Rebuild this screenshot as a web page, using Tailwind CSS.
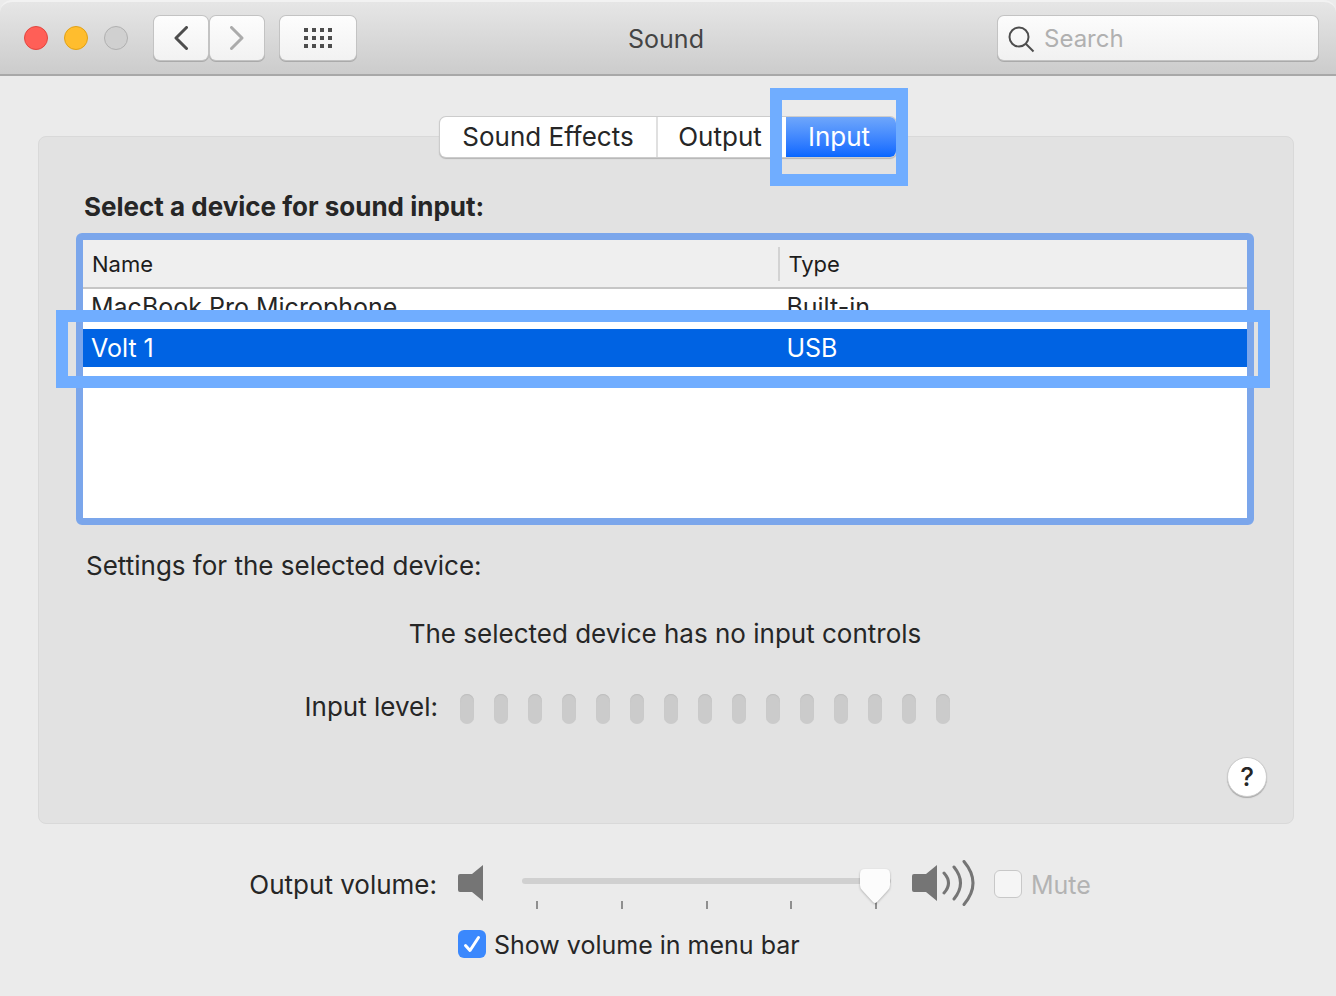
<!DOCTYPE html>
<html lang="en">
<head>
    <meta charset="UTF-8">
    <meta name="viewport" content="width=device-width, initial-scale=1.0">
    <title>Sound</title>
    <script src="https://cdn.jsdelivr.net/npm/@tailwindcss/browser@4"></script>
</head>
<body class="min-h-screen bg-[#ebebeb] font-[Inter,'Liberation_Sans',sans-serif] text-[25px] leading-8 text-[#262626]">
    <!-- Title bar -->
    <header class="grid h-[76px] grid-cols-[1fr_auto_1fr] items-center rounded-t-xl border-t-2 border-b-2 border-t-[#f2f2f2] border-b-[#a8a8a8] bg-linear-to-b from-[#e6e6e6] to-[#cccccc] pr-[18px] pl-6">
        <div class="flex items-center">
            <div class="flex gap-4">
                <button type="button" aria-label="Close" class="size-6 rounded-full border border-[#e2463f] bg-[#ff5f57]"></button>
                <button type="button" aria-label="Minimize" class="size-6 rounded-full border border-[#e1a116] bg-[#ffbd2e]"></button>
                <button type="button" aria-label="Zoom" disabled class="size-6 rounded-full border border-[#b0b0b0] bg-[#d0d0d0]"></button>
            </div>
            <div class="ml-[26px] flex gap-0.5">
                <button type="button" aria-label="Back" class="flex h-11 w-[54px] items-center justify-center rounded-md bg-linear-to-b from-[#fdfdfd] to-[#f2f2f2] shadow-[0_0_0_1px_#c3c3c3,0_1px_0_1px_#aaaaaa]">
                    <svg class="h-6 w-[14px]" viewBox="0 0 14 24" fill="none" stroke="#4d4d4d" stroke-width="3" stroke-linecap="round" stroke-linejoin="round"><path d="M12.500 1.500 2 12l10.500 10.500"/></svg>
                </button>
                <button type="button" aria-label="Forward" disabled class="flex h-11 w-[54px] items-center justify-center rounded-md bg-linear-to-b from-[#fdfdfd] to-[#f2f2f2] shadow-[0_0_0_1px_#c3c3c3,0_1px_0_1px_#aaaaaa]">
                    <svg class="h-6 w-[14px]" viewBox="0 0 14 24" fill="none" stroke="#ababab" stroke-width="3" stroke-linecap="round" stroke-linejoin="round"><path d="M1.500 1.500 12 12 1.500 22.500"/></svg>
                </button>
            </div>
            <button type="button" aria-label="Show All" class="ml-4 flex h-11 w-[76px] items-center justify-center rounded-md bg-linear-to-b from-[#fdfdfd] to-[#f2f2f2] shadow-[0_0_0_1px_#c3c3c3,0_1px_0_1px_#aaaaaa]">
                <svg class="h-5 w-7" viewBox="0 0 28 20" fill="#4d4d4d"><path d="M0 0h4v4H0zM8 0h4v4H8zM16 0h4v4h-4zM24 0h4v4h-4zM0 8h4v4H0zM8 8h4v4H8zM16 8h4v4h-4zM24 8h4v4h-4zM0 16h4v4H0zM8 16h4v4H8zM16 16h4v4h-4zM24 16h4v4h-4z"/></svg>
            </button>
        </div>
        <h1 class="pt-0.5 pr-[10px] text-[#444444]">Sound</h1>
        <label class="flex h-11 w-80 items-center justify-self-end rounded-md bg-linear-to-b from-[#fcfcfc] to-[#f1f1f1] pl-[10px] shadow-[0_0_0_1px_#c3c3c3,0_1px_0_1px_#aaaaaa]">
            <svg class="mt-1 size-7 shrink-0" viewBox="0 0 28 28" fill="none" stroke="#4d4d4d" stroke-width="2"><circle cx="11" cy="11" r="9.500"/><path d="m17.500 17.500 8 8"/></svg>
            <input type="text" aria-label="Search" placeholder="Search" class="ml-2 h-full w-full min-w-0 bg-transparent text-2xl outline-none placeholder:text-[#b0b0b0]">
        </label>
    </header>

    <main class="pt-[41px] pr-[42px] pb-9 pl-[38px]">
        <!-- Tabs sit across the top edge of the panel -->
        <div class="flex justify-center pl-1">
            <div role="tablist" class="relative z-10 flex h-10 w-[456px] rounded-md bg-white text-[26px] shadow-[0_0_0_1px_#cccccc,0_1px_1px_1px_#b5b5b5]">
                <button type="button" role="tab" class="w-[218px] border-r-2 border-[#e0e0e0]">Sound Effects</button>
                <button type="button" role="tab" class="flex-1 pr-1">Output</button>
                <div class="relative w-[110px]">
                    <button type="button" role="tab" aria-selected="true" class="h-full w-full rounded-r-md bg-linear-to-b from-[#6ea6fb] to-[#0566ff] pr-1 text-white">Input</button>
                    <div class="pointer-events-none absolute -top-[29px] -right-3 -bottom-[29px] -left-4 border-12 border-[#70adff]"></div>
                </div>
            </div>
        </div>

        <section class="-mt-[21px] rounded-lg border border-[#d9d9d9] bg-[#e2e2e2] pt-[54px] pr-[39px] pb-[26px] pl-[37px] text-[26px]">
            <h2 id="devices" class="pl-2 font-bold">Select a device for sound input:</h2>
            <div class="mt-[10px] h-[292px] rounded-md border-7 border-[#7ba6eb] bg-white text-[25px]">
                <table aria-labelledby="devices" class="w-full table-fixed border-collapse text-left">
                    <thead>
                        <tr class="h-12 border-b-2 border-b-[#c6c6c6] bg-[#efefef] text-[22px]">
                            <th class="w-3/5 p-0 pl-[9px] font-normal text-[#1c1c1c]">Name</th>
                            <th class="p-0 font-normal text-[#1c1c1c]"><span class="-ml-[3px] flex h-[34px] items-center border-l-2 border-[#d3d3d3] pl-2">Type</span></th>
                        </tr>
                    </thead>
                    <tbody>
                        <tr class="h-[41px]">
                            <td class="p-0 pb-1 pl-2">MacBook Pro Microphone</td>
                            <td class="p-0 pb-1 pl-[5px]">Built-in</td>
                        </tr>
                        <tr class="relative h-[38px] bg-[#0063e3] text-white">
                            <td class="p-0 pl-2">Volt 1</td>
                            <td class="p-0 pl-[5px]">USB
                                <div class="pointer-events-none absolute -top-[19px] -right-[23px] -bottom-[21px] -left-[27px] border-12 border-[#70adff]"></div>
                            </td>
                        </tr>
                    </tbody>
                </table>
            </div>

            <h3 class="mt-[25px] pl-[10px]">Settings for the selected device:</h3>
            <p class="mt-9 text-center">The selected device has no input controls</p>
            <div class="mt-10 flex items-center">
                <span id="level" class="w-[362px] text-right">Input level:</span>
                <div role="meter" aria-labelledby="level" aria-valuenow="0" aria-valuemax="15" class="mt-1 ml-[22px] flex gap-5 *:h-[30px] *:w-[14px] *:rounded-full *:bg-[#cbcbcb] *:inset-shadow-[0_1px_1px_#bdbdbd]">
                    <i></i><i></i><i></i><i></i><i></i>
                    <i></i><i></i><i></i><i></i><i></i>
                    <i></i><i></i><i></i><i></i><i></i>
                </div>
            </div>
            <button type="button" aria-label="Help" class="mt-[33px] -mr-[13px] ml-auto block size-10 rounded-full border border-[#cccccc] bg-white font-medium shadow-[0_1px_1px_#a8a8a8]">?</button>
        </section>

        <!-- Output volume -->
        <div class="mt-8 flex h-14 items-center">
            <label for="volume" class="w-[399px] pt-0.5 text-right text-[26px]">Output volume:</label>
            <svg class="ml-[21px] h-[38px] w-[26px]" viewBox="0 0 26 38" fill="#757575"><path d="M2 9h12L25 0v36l-11-9H2q-2 0-2-2V11q0-2 2-2z"/></svg>
            <div class="relative mt-[10px] ml-[38px] h-10 w-[369px]">
                <div class="absolute inset-x-0 top-[9px] h-1.5 rounded-full bg-[#d0d0d0]"></div>
                <div class="absolute inset-x-[14px] bottom-0 flex h-2 justify-between *:w-0.5 *:bg-[#8f8f8f]"><i></i><i></i><i></i><i></i><i></i></div>
                <input id="volume" type="range" min="0" max="100" value="100" class="relative block h-9 w-full appearance-none bg-transparent drop-shadow-[0_1px_1px_rgba(0,0,0,0.25)] [&::-webkit-slider-thumb]:h-9 [&::-webkit-slider-thumb]:w-8 [&::-webkit-slider-thumb]:appearance-none [&::-webkit-slider-thumb]:bg-[#fcfcfc] [&::-webkit-slider-thumb]:[clip-path:path('M6_0H26Q31_0_31_5V16Q31_19_29_21L18_33Q16_35_14_33L3_21Q1_19_1_16V5Q1_0_6_0Z')]">
            </div>
            <svg class="ml-[21px] h-12 w-[63px]" viewBox="0 0 63 48" fill="#757575"><path d="M2 14h12L25 5v36l-11-9H2q-2 0-2-2V16q0-2 2-2z"/><g fill="none" stroke="#757575" stroke-width="3" stroke-linecap="round"><path d="M32 13q9 10 0 20M42 7q13 16 0 32M52 1.500q18 21.500 0 43"/></g></svg>
            <label class="ml-[19px] flex items-center gap-[9px] text-[#b3b3b3]">
                <input type="checkbox" disabled class="size-7 appearance-none rounded-md border border-[#c8c8c8] bg-[#f5f5f5]">
                <span class="pt-0.5">Mute</span>
            </label>
        </div>
        <label class="mt-[15px] ml-[420px] flex w-fit items-center gap-2">
            <span class="relative size-7">
                <input type="checkbox" checked class="block size-7 appearance-none rounded-md bg-[#3b88fd]">
                <svg class="absolute inset-0 size-7" viewBox="0 0 28 28" fill="none" stroke="#fff" stroke-width="3" stroke-linecap="round" stroke-linejoin="round"><path d="m7.500 15.500 4.500 5 8.500-13"/></svg>
            </span>
            <span class="pt-0.5">Show volume in menu bar</span>
        </label>
    </main>
</body>
</html>
